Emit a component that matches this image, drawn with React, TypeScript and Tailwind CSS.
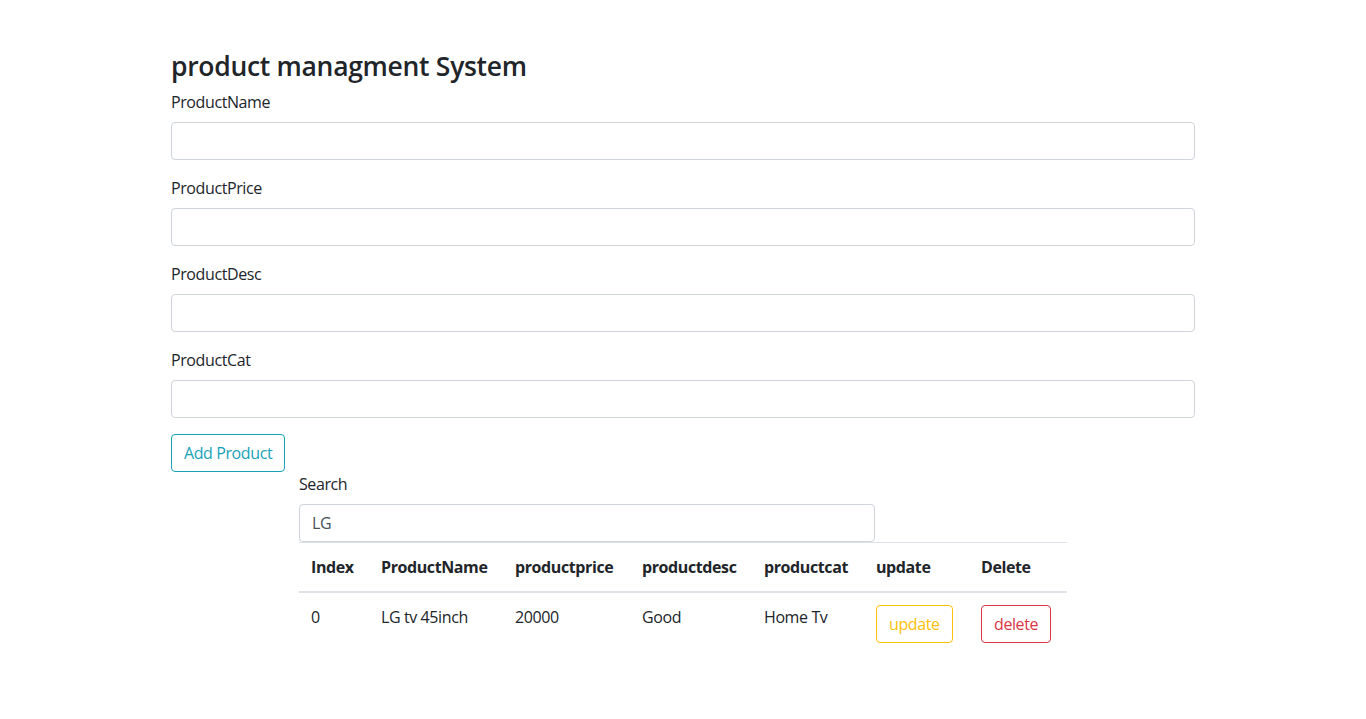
import React, { useState } from "react";

const inputCls =
  "block w-full h-[38px] px-3 text-base text-[#495057] bg-white border border-[#ced4da] rounded-[4px] outline-none";

function Field({ label }: { label: string }) {
  return (
    <div className="mb-4">
      <label className="block mb-2 leading-6">{label}</label>
      <input type="text" className={inputCls} />
    </div>
  );
}

const products = [
  { name: "LG tv 45inch", price: "20000", desc: "Good", cat: "Home Tv" },
];

export default function App() {
  const [search, setSearch] = useState("LG");

  return (
    <div className="min-h-screen bg-white text-[#212529] font-['Segoe_UI','Open_Sans',sans-serif] text-base tracking-[-0.4px]">
      <div className="w-[1024px] mx-auto pt-[51px]">
        <h3 className="text-[26.5px] font-semibold leading-[31px] mb-2 tracking-[-0.3px]">
          product managment System
        </h3>
        <Field label="ProductName" />
        <Field label="ProductPrice" />
        <Field label="ProductDesc" />
        <Field label="ProductCat" />
        <button className="h-[38px] px-3 leading-6 text-[#17a2b8] border border-[#17a2b8] rounded-[4px] bg-white">
          Add Product
        </button>

        <div className="w-[768px] mx-auto">
          <label className="block mb-2 leading-6">Search</label>
          <input
            type="text"
            value={search}
            onChange={(e) => setSearch(e.target.value)}
            className="block w-[576px] h-[38px] px-3 text-base text-[#495057] bg-white border border-[#ced4da] rounded-[4px] outline-none"
          />
          <table className="w-full table-fixed border-collapse text-left">
            <thead>
              <tr className="border-t border-[#dee2e6] border-b-2">
                <th className="w-[70px] p-3 font-bold align-bottom">Index</th>
                <th className="w-[134px] p-3 font-bold align-bottom">ProductName</th>
                <th className="w-[127px] p-3 font-bold align-bottom">productprice</th>
                <th className="w-[122px] p-3 font-bold align-bottom">productdesc</th>
                <th className="w-[112px] p-3 font-bold align-bottom">productcat</th>
                <th className="w-[105px] p-3 font-bold align-bottom">update</th>
                <th className="w-[98px] p-3 font-bold align-bottom">Delete</th>
              </tr>
            </thead>
            <tbody>
              {products
                .filter((p) => p.name.includes(search))
                .map((p, i) => (
                  <tr key={i}>
                    <td className="p-3 align-top">{i}</td>
                    <td className="p-3 align-top">{p.name}</td>
                    <td className="p-3 align-top">{p.price}</td>
                    <td className="p-3 align-top">{p.desc}</td>
                    <td className="p-3 align-top">{p.cat}</td>
                    <td className="p-3 align-top">
                      <button className="h-[38px] px-3 leading-6 text-[#ffc107] border border-[#ffc107] rounded-[4px] bg-white">
                        update
                      </button>
                    </td>
                    <td className="p-3 align-top">
                      <button className="h-[38px] px-3 leading-6 text-[#dc3545] border border-[#dc3545] rounded-[4px] bg-white">
                        delete
                      </button>
                    </td>
                  </tr>
                ))}
            </tbody>
          </table>
        </div>
      </div>
    </div>
  );
}
